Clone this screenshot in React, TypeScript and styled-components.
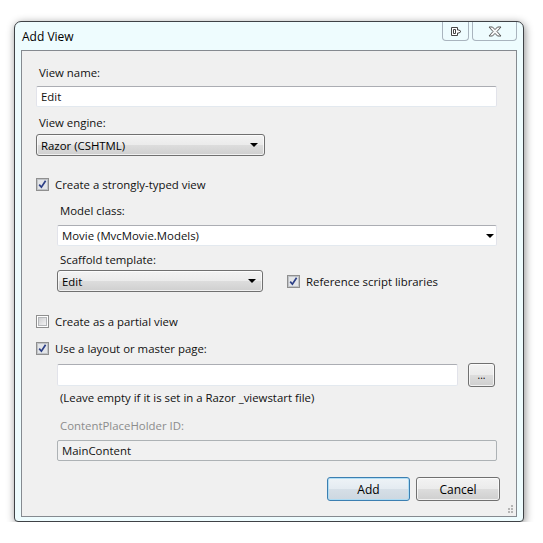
import styled, { createGlobalStyle } from "styled-components";

const GlobalStyle = createGlobalStyle`
  html, body {
    margin: 0;
    padding: 0;
    background: #ffffff;
  }
  body {
    font-family: "Open Sans", "Noto Sans", "DejaVu Sans", sans-serif;
    font-size: 11.4px;
    color: #111;
  }
`;

const Window = styled.div`
  margin: 21px 0 0 14px;
  width: 510px;
  height: 501px;
  box-sizing: border-box;
  border: 1px solid #3f4246;
  border-radius: 7px 7px 4px 4px;
  background: #eefcfe;
  box-shadow: 1px 2px 9px rgba(0, 0, 0, 0.45);
  display: flex;
  flex-direction: column;
  padding: 0 6px 4px 6px;
`;

const TitleBar = styled.div`
  height: 28px;
  display: flex;
  align-items: flex-start;
  justify-content: space-between;
`;

const Title = styled.div`
  padding: 6px 0 0 1px;
  font-size: 12px;
  color: #000;
`;

const Captions = styled.div`
  display: flex;
  gap: 3px;
`;

const CaptionButton = styled.div<{ $w: number }>`
  width: ${(p) => p.$w}px;
  height: 19px;
  box-sizing: border-box;
  border: 1px solid #a9b4be;
  border-top: none;
  border-radius: 0 0 4px 4px;
  display: flex;
  align-items: center;
  justify-content: center;
`;

const Client = styled.div`
  flex: 1;
  border: 1px solid #858a90;
  background: #f0f0f0;
  display: flex;
  flex-direction: column;
  padding: 0 0 0 14px;
  position: relative;
`;

const Field = styled.div<{ $mt: number }>`
  margin-top: ${(p) => p.$mt}px;
  display: flex;
  flex-direction: column;
`;

const Indent = styled.div`
  padding-left: 21px;
  display: flex;
  flex-direction: column;
`;

const Label = styled.div<{ $mt?: number; $muted?: boolean }>`
  margin-top: ${(p) => p.$mt ?? 0}px;
  height: 20px;
  line-height: 20px;
  padding-left: 3px;
  color: ${(p) => (p.$muted ? "#8c8c8c" : "#111")};
  white-space: nowrap;
`;

const TextBox = styled.div<{ $w?: number; $h?: number; $mt?: number; $disabled?: boolean }>`
  margin-top: ${(p) => p.$mt ?? 0}px;
  width: ${(p) => (p.$w ? `${p.$w}px` : "auto")};
  margin-right: ${(p) => (p.$w ? 0 : 19)}px;
  height: ${(p) => p.$h ?? 21}px;
  box-sizing: border-box;
  border: 1px solid;
  border-color: ${(p) =>
    p.$disabled ? "#adb2b5" : "#abadb3 #e2e3ea #e3e9ef #e2e3ea"};
  border-radius: 2px;
  background: ${(p) => (p.$disabled ? "#f1f1f1" : "#ffffff")};
  display: flex;
  align-items: center;
  padding: 0 4px;
  white-space: nowrap;
  color: #111;
`;

const EditCombo = styled(TextBox)`
  justify-content: space-between;
  padding-right: 2px;
`;

const ButtonCombo = styled.div<{ $w: number; $mt?: number }>`
  margin-top: ${(p) => p.$mt ?? 0}px;
  width: ${(p) => p.$w}px;
  height: 22px;
  box-sizing: border-box;
  border: 1px solid #707070;
  border-radius: 3px;
  background: linear-gradient(#f3f3f3 0%, #ebebeb 49%, #dddddd 50%, #cfcfcf 100%);
  box-shadow: inset 0 0 0 1px rgba(255, 255, 255, 0.7);
  display: flex;
  align-items: center;
  justify-content: space-between;
  padding: 0 6px 0 4px;
  white-space: nowrap;
  color: #000;
`;

const Arrow = styled.span`
  width: 0;
  height: 0;
  border-left: 4px solid transparent;
  border-right: 4px solid transparent;
  border-top: 4px solid #000;
`;

const CheckRow = styled.label<{ $mt?: number }>`
  margin-top: ${(p) => p.$mt ?? 0}px;
  height: 20px;
  display: flex;
  align-items: center;
  gap: 6px;
  white-space: nowrap;
  color: #111;
`;

const Box = styled.span`
  width: 13px;
  height: 13px;
  box-sizing: border-box;
  border: 1px solid #8f8f8f;
  background: #fff;
  display: flex;
  align-items: center;
  justify-content: center;
`;

const BoxInner = styled.span`
  width: 9px;
  height: 9px;
  background: linear-gradient(135deg, #cfd0d2 0%, #f2f2f3 100%);
  border: 1px solid #b4b6b9;
  box-sizing: border-box;
`;

const Row = styled.div<{ $mt?: number; $gap?: number }>`
  margin-top: ${(p) => p.$mt ?? 0}px;
  display: flex;
  align-items: center;
  gap: ${(p) => p.$gap ?? 0}px;
`;

const SmallButton = styled.div`
  margin-left: 10px;
  width: 27px;
  height: 24px;
  box-sizing: border-box;
  border: 1px solid #707070;
  border-radius: 3px;
  background: linear-gradient(#f3f3f3 0%, #ebebeb 49%, #dddddd 50%, #cfcfcf 100%);
  box-shadow: inset 0 0 0 1px rgba(255, 255, 255, 0.7);
  display: flex;
  align-items: center;
  justify-content: center;
  font-size: 10px;
  color: #000;
`;

const Footer = styled.div`
  margin-top: 16px;
  margin-right: 16px;
  display: flex;
  justify-content: flex-end;
  gap: 6px;
`;

const DialogButton = styled.div<{ $default?: boolean }>`
  width: ${(p) => (p.$default ? 83 : 84)}px;
  height: 24px;
  box-sizing: border-box;
  border: 1px solid ${(p) => (p.$default ? "#3c7fb1" : "#707070")};
  border-radius: 3px;
  background: ${(p) =>
    p.$default
      ? "linear-gradient(#eef3f7 0%, #e4ebf1 49%, #d6dfe7 50%, #cdd7e0 100%)"
      : "linear-gradient(#f3f3f3 0%, #ebebeb 49%, #dddddd 50%, #cfcfcf 100%)"};
  box-shadow: inset 0 0 0 1px
    ${(p) => (p.$default ? "rgba(170, 220, 245, 0.9)" : "rgba(255,255,255,0.7)")};
  display: flex;
  align-items: center;
  justify-content: center;
  font-size: 12px;
  color: #000;
`;

const Grip = styled.svg`
  position: absolute;
  right: 2px;
  bottom: 2px;
`;

const Check = ({ checked }: { checked: boolean }) => (
  <Box>
    {checked ? (
      <svg width="11" height="11" viewBox="0 0 11 11">
        <rect x="0.5" y="0.5" width="10" height="10" fill="#e3e5e8" stroke="#c0c3c7" />
        <path d="M2.2 5.6 L4.4 8.2 L8.6 1.8" fill="none" stroke="#2c3f86" strokeWidth="1.7" />
      </svg>
    ) : (
      <BoxInner />
    )}
  </Box>
);

const Checkbox = ({ checked, label, mt }: { checked: boolean; label: string; mt?: number }) => (
  <CheckRow $mt={mt}>
    <Check checked={checked} />
    {label}
  </CheckRow>
);

export default function App() {
  return (
    <>
      <GlobalStyle />
      <Window>
        <TitleBar>
          <Title>Add View</Title>
          <Captions>
            <CaptionButton $w={27}>
              <svg width="12" height="11" viewBox="0 0 12 11">
                <path
                  d="M1.5 1.5 H7.5 V4 H9 L11 5.5 L9 7 H7.5 V9.5 H1.5 Z"
                  fill="#fff"
                  stroke="#444"
                />
                <path d="M3.5 3.5 H5.5 V7.5 H3.5 Z" fill="none" stroke="#444" />
              </svg>
            </CaptionButton>
            <CaptionButton $w={45}>
              <svg width="14" height="11" viewBox="0 0 14 11">
                <path
                  d="M1 1 H4.5 L7 3.6 L9.5 1 H13 L9 5.5 L13 10 H9.5 L7 7.4 L4.5 10 H1 L5 5.5 Z"
                  fill="#f8f8f8"
                  stroke="#595959"
                  strokeLinejoin="round"
                />
              </svg>
            </CaptionButton>
          </Captions>
        </TitleBar>
        <Client>
          <Field $mt={12}>
            <Label>View name:</Label>
            <TextBox $mt={3}>Edit</TextBox>
          </Field>
          <Field $mt={6}>
            <Label>View engine:</Label>
            <ButtonCombo $w={229} $mt={1}>
              Razor (CSHTML)
              <Arrow />
            </ButtonCombo>
          </Field>
          <Checkbox checked mt={18} label="Create a strongly-typed view" />
          <Indent>
            <Label $mt={7}>Model class:</Label>
            <EditCombo $mt={4}>
              Movie (MvcMovie.Models)
              <Arrow />
            </EditCombo>
            <Label $mt={4}>Scaffold template:</Label>
            <Row $gap={24}>
              <ButtonCombo $w={206}>
                Edit
                <Arrow />
              </ButtonCombo>
              <Checkbox checked label="Reference script libraries" />
            </Row>
          </Indent>
          <Checkbox checked={false} mt={19} label="Create as a partial view" />
          <Checkbox checked mt={7} label="Use a layout or master page:" />
          <Indent>
            <Row $mt={5}>
              <TextBox $w={401} $h={22} />
              <SmallButton>...</SmallButton>
            </Row>
            <Label $mt={1}>(Leave empty if it is set in a Razor _viewstart file)</Label>
            <Label $mt={8} $muted>
              ContentPlaceHolder ID:
            </Label>
            <TextBox $mt={4} $disabled>
              MainContent
            </TextBox>
          </Indent>
          <Footer>
            <DialogButton $default>Add</DialogButton>
            <DialogButton>Cancel</DialogButton>
          </Footer>
          <Grip width="8" height="10" viewBox="0 0 8 10">
            <g fill="#b5b5b5">
              <rect x="5" y="1" width="2" height="2" />
              <rect x="5" y="4" width="2" height="2" />
              <rect x="2" y="4" width="2" height="2" />
              <rect x="5" y="7" width="2" height="2" />
              <rect x="2" y="7" width="2" height="2" />
            </g>
          </Grip>
        </Client>
      </Window>
    </>
  );
}
